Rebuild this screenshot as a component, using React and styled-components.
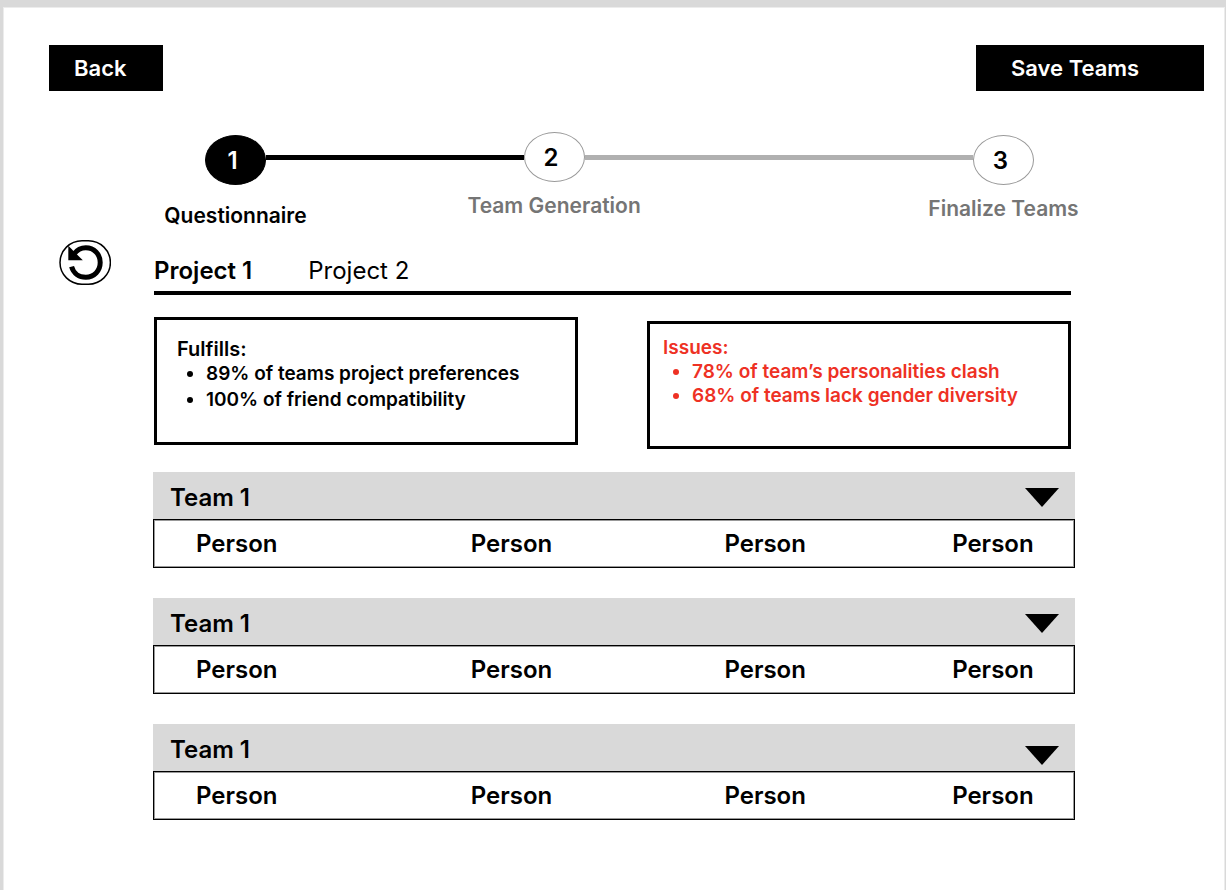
import React, { useState } from "react";
import styled, { createGlobalStyle } from "styled-components";

const GlobalStyle = createGlobalStyle`
  *, *::before, *::after { box-sizing: border-box; }
  body {
    margin: 0;
    background: #d9d9d9;
    color: #000;
    font-family: Inter, "Liberation Sans", sans-serif;
    font-size: 24px;
    font-weight: 600;
    line-height: 28px;
  }
  button { font: inherit; color: inherit; border: 0; cursor: pointer; }
  h2, h3, ul, ol, p { margin: 0; padding: 0; font: inherit; }
`;

const Page = styled.div`
  display: flex;
  flex-direction: column;
  min-height: calc(100vh - 7px);
  margin: 7px 1px 0 3px;
  border: 1px solid #ececec;
  border-bottom: 0;
  background: #fff;
`;

const Header = styled.header`
  display: flex;
  justify-content: space-between;
  padding: 37px 20px 0 45px;
`;

const ActionButton = styled.button`
  width: ${(p) => p.$width}px;
  height: 46px;
  padding: 0 0 0 ${(p) => p.$inset}px;
  background: #000;
  color: #fff;
  font-size: 22px;
  text-align: left;
`;

const Stepper = styled.ol`
  display: flex;
  align-items: flex-start;
  height: 108px;
  margin: 41px 190px 0 201px;
  list-style: none;
`;

const Step = styled.li`
  display: flex;
  flex-direction: column;
  align-items: center;
  gap: ${(p) => p.$gap}px;
  width: 61px;
  padding-top: ${(p) => p.$drop}px;
`;

const StepNumber = styled.span`
  display: flex;
  flex: none;
  align-items: center;
  justify-content: center;
  width: 61px;
  height: 50px;
  padding: 1px 6px 0 0;
  border: 1px solid ${(p) => (p.$active ? "#000" : "#999")};
  border-radius: 50%;
  background: ${(p) => (p.$active ? "#000" : "#fff")};
  color: ${(p) => (p.$active ? "#fff" : "#000")};
`;

const StepLabel = styled.span`
  color: ${(p) => (p.$active ? "#000" : "#757575")};
  font-size: 21px;
  white-space: nowrap;
`;

const StepLine = styled.li`
  flex: ${(p) => p.$grow} 1 0;
  height: 5px;
  margin-top: 23px;
  background: ${(p) => (p.$done ? "#000" : "#b0b0b0")};
`;

const Main = styled.main`
  display: flex;
  align-items: flex-start;
  gap: 42px;
  padding: 0 149px 70px 55px;
`;

const RefreshButton = styled.button`
  flex: none;
  width: 52px;
  height: 45px;
  padding: 0;
  background: none;
  svg { display: block; }
`;

const Content = styled.div`
  flex: 1;
  min-width: 0;
`;

const Project = styled.section`
  padding: 17px 4px 0 1px;
`;

const Tabs = styled.div`
  display: flex;
  gap: 56px;
  padding-bottom: 6px;
  border-bottom: 4px solid #000;
`;

const Tab = styled.button`
  padding: 0;
  background: none;
  font-weight: ${(p) => (p.$selected ? 600 : 400)};
`;

const Summary = styled.div`
  display: grid;
  grid-template-columns: 1fr 1fr;
  align-items: start;
  gap: 69px;
  padding-top: 22px;
`;

const SummaryCard = styled.section`
  height: 128px;
  margin-top: ${(p) => (p.$issue ? 4 : 0)}px;
  padding: ${(p) => (p.$issue ? "12px 13px" : "17px 20px")};
  border: 3px solid #000;
  color: ${(p) => (p.$issue ? "#ee3124" : "#000")};
  font-size: 19px;
  line-height: ${(p) => (p.$issue ? 24 : 26)}px;
`;

const SummaryTitle = styled.h2`
  font-size: ${(p) => (p.$large ? 20 : 19)}px;
  line-height: 24px;
`;

const SummaryList = styled.ul`
  padding-left: 29px;
`;

const Teams = styled.div`
  display: flex;
  flex-direction: column;
  gap: 30px;
  padding-top: 23px;
`;

const TeamHeader = styled.button`
  display: flex;
  align-items: center;
  justify-content: space-between;
  width: 100%;
  height: 47px;
  padding: 4px 16px 0 17px;
  background: #d9d9d9;
`;

const Caret = styled.svg`
  display: block;
  margin-top: ${(p) => (p.$low ? 12 : 0)}px;
`;

const Members = styled.ul`
  display: grid;
  grid-template-columns: 275fr 254fr 228fr 122fr;
  align-items: center;
  height: 49px;
  padding-left: 42px;
  border: 1px solid #000;
  box-shadow: inset 0 0 0 1px #999;
  list-style: none;
`;

const steps = [
  { label: "Questionnaire", active: true, drop: 3, gap: 17 },
  { label: "Team Generation", drop: 0, gap: 10, grow: 258 },
  { label: "Finalize Teams", drop: 3, gap: 10, grow: 389 },
];

const people = ["Person", "Person", "Person", "Person"];

function RefreshIcon() {
  return (
    <svg width="52" height="45" viewBox="0 0 52 45" aria-hidden="true">
      <rect x="1" y="0.8" width="50.4" height="43.4" rx="22" fill="#fff" stroke="#000" strokeWidth="1.5" />
      <path d="M12.6 26.6C14.4 33.2 20 37.2 26.8 37.2C35.2 37.2 41.2 30.8 41.2 22.5C41.2 14.2 35 7.8 26.8 7.8C22 7.8 17.8 10.3 15 14" fill="none" stroke="#000" strokeWidth="5" />
      <path d="M9.3 5.8V20.3H23.8Z" />
    </svg>
  );
}

function Team({ name, low }) {
  const [open, setOpen] = useState(true);
  return (
    <section>
      <TeamHeader aria-expanded={open} onClick={() => setOpen(!open)}>
        <span>{name}</span>
        <Caret $low={low} width="34" height="19" viewBox="0 0 34 19" aria-hidden="true">
          <path d="M0 0H34L17 19Z" />
        </Caret>
      </TeamHeader>
      {open && (
        <Members>
          {people.map((person, i) => (
            <li key={i}>{person}</li>
          ))}
        </Members>
      )}
    </section>
  );
}

export default function App() {
  const [project, setProject] = useState(0);
  return (
    <>
      <GlobalStyle />
      <Page>
        <Header>
          <ActionButton $width={114} $inset={25}>Back</ActionButton>
          <ActionButton $width={228} $inset={35}>Save Teams</ActionButton>
        </Header>
        <Stepper>
          {steps.map((step, i) => (
            <React.Fragment key={step.label}>
              {i > 0 && <StepLine $grow={step.grow} $done={i === 1} aria-hidden="true" />}
              <Step $drop={step.drop} $gap={step.gap}>
                <StepNumber $active={step.active}>{i + 1}</StepNumber>
                <StepLabel $active={step.active}>{step.label}</StepLabel>
              </Step>
            </React.Fragment>
          ))}
        </Stepper>
        <Main>
          <RefreshButton aria-label="Regenerate teams">
            <RefreshIcon />
          </RefreshButton>
          <Content>
            <Project>
              <Tabs>
                {["Project 1", "Project 2"].map((name, i) => (
                  <Tab key={name} $selected={project === i} onClick={() => setProject(i)}>
                    {name}
                  </Tab>
                ))}
              </Tabs>
              <Summary>
                <SummaryCard>
                  <SummaryTitle $large>Fulfills:</SummaryTitle>
                  <SummaryList>
                    <li>89% of teams project preferences</li>
                    <li>100% of friend compatibility</li>
                  </SummaryList>
                </SummaryCard>
                <SummaryCard $issue>
                  <SummaryTitle>Issues:</SummaryTitle>
                  <SummaryList>
                    <li>78% of team’s personalities clash</li>
                    <li>68% of teams lack gender diversity</li>
                  </SummaryList>
                </SummaryCard>
              </Summary>
            </Project>
            <Teams>
              <Team name="Team 1" />
              <Team name="Team 1" />
              <Team name="Team 1" low />
            </Teams>
          </Content>
        </Main>
      </Page>
    </>
  );
}
